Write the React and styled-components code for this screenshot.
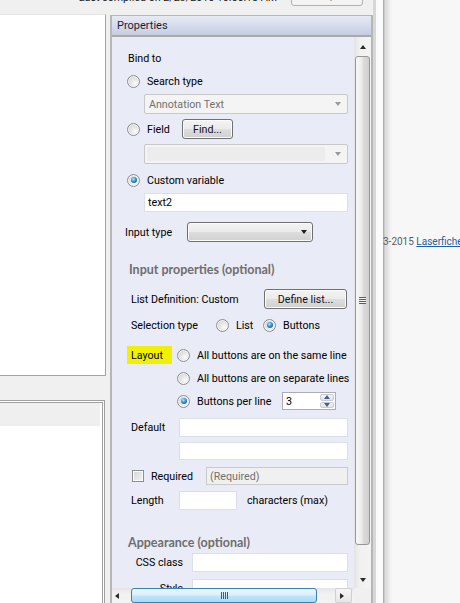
import React from "react";
import styled, { createGlobalStyle, css } from "styled-components";

const GlobalStyle = createGlobalStyle`
  html, body {
    margin: 0;
    padding: 0;
  }
  body {
    width: 460px;
    height: 603px;
    overflow: hidden;
    background: #f7f7f7;
    font-family: Roboto, "Liberation Sans", sans-serif;
    font-size: 10.7px;
    color: #000;
  }
`;

const Screen = styled.div`
  display: flex;
  width: 460px;
  height: 603px;
  overflow: hidden;
`;

const Window = styled.div`
  flex-shrink: 0;
  width: 376px;
  height: 100%;
  border-right: 7px solid #fbfbfb;
`;

const Frame = styled.div`
  display: flex;
  flex-direction: column;
  width: 373px;
  height: 100%;
  background: #f0f0f0;
  border-right: 3px solid #d7d7d7;
`;

const TopBar = styled.div`
  display: flex;
  justify-content: flex-end;
  align-items: flex-start;
  height: 14px;
  padding-right: 10px;
  overflow: hidden;
  flex-shrink: 0;
`;

const CompiledText = styled.span`
  margin-top: -9px;
  line-height: 14px;
  white-space: nowrap;
  color: #1a1a1a;
`;

const CompileButton = styled.div`
  width: 72px;
  height: 22px;
  margin-top: -16px;
  margin-left: 14px;
  box-sizing: border-box;
  border: 1px solid #adb2b5;
  border-radius: 3px;
  background: #f4f4f4;
  color: #838383;
  display: flex;
  align-items: center;
  justify-content: center;
`;

const Main = styled.div`
  display: flex;
  flex: 1;
  gap: 4px;
  min-height: 0;
`;

const LeftColumn = styled.div`
  display: flex;
  flex-direction: column;
  width: 106px;
  flex-shrink: 0;
`;

const Canvas = styled.div`
  height: 362px;
  box-sizing: border-box;
  background: #fff;
  border-top: 1px solid #e2e2e2;
  border-right: 1px solid #a3a3a3;
  border-bottom: 1px solid #a3a3a3;
`;

const ListPanel = styled.div`
  display: flex;
  flex: 1;
  width: 105px;
  margin-top: 24px;
  box-sizing: border-box;
  padding: 1px 1px 0 0;
  background: #fff;
  border-top: 1px solid #a0a0a0;
  border-right: 1px solid #a0a0a0;
`;

const ListInner = styled.div`
  flex: 1;
  display: flex;
  flex-direction: column;
  border-top: 1px solid #a0a0a0;
  border-right: 1px solid #a0a0a0;
`;

const ListHeader = styled.div`
  height: 23px;
  margin-right: 2px;
  background: #efefef;
`;

const Properties = styled.div`
  display: flex;
  flex-direction: column;
  width: 263px;
  margin-top: 1px;
  box-sizing: border-box;
  border: 2px solid #b6b6b6;
  border-top-width: 1px;
  border-bottom: none;
  flex-shrink: 0;
`;

const PanelHeader = styled.div`
  height: 19px;
  display: flex;
  align-items: center;
  padding-left: 5px;
  font-size: 11px;
  color: #1c1c38;
  background: linear-gradient(to bottom, #e6eaf4, #d3d9e9 60%, #c5cde1);
  border-bottom: 2px solid #a9a9a9;
  flex-shrink: 0;
`;

const PanelBody = styled.div`
  flex: 1;
  min-height: 0;
  display: grid;
  grid-template-columns: 1fr 17px;
  grid-template-rows: 1fr 15px;
`;

const Content = styled.div`
  display: flex;
  flex-direction: column;
  overflow: hidden;
  padding: 13px 6px 0 13px;
  background: #e9ebf6;
`;

const Row = styled.div`
  display: flex;
  align-items: center;
  flex-shrink: 0;
  height: ${(p) => p.$h || 16}px;
  margin-top: ${(p) => p.$mt || 0}px;
  margin-left: ${(p) => p.$ml || 0}px;
  white-space: nowrap;
`;

const Label = styled.span`
  flex-shrink: 0;
  width: ${(p) => (p.$w ? `${p.$w}px` : "auto")};
  text-align: ${(p) => (p.$right ? "right" : "left")};
  margin-left: ${(p) => p.$ml || 0}px;
`;

const SectionTitle = styled.span`
  font-family: Lato, "Liberation Sans", sans-serif;
  font-size: 12.5px;
  font-weight: 700;
  color: #6e6e6e;
`;

const Highlight = styled.span`
  display: flex;
  align-items: center;
  flex-shrink: 0;
  width: 45px;
  height: 18px;
  box-sizing: border-box;
  padding-left: 4px;
  background: #f0f000;
`;

const Option = styled.span`
  display: flex;
  align-items: center;
  gap: 7px;
  flex-shrink: 0;
  width: ${(p) => (p.$w ? `${p.$w}px` : "auto")};
  margin-left: ${(p) => p.$ml || 0}px;
`;

const Radio = styled.span`
  display: flex;
  align-items: center;
  justify-content: center;
  flex-shrink: 0;
  width: 13px;
  height: 13px;
  box-sizing: border-box;
  border-radius: 50%;
  border: 1px solid #8d9095;
  background: radial-gradient(circle at 65% 65%, #fbfbfb 0%, #e4e4e4 45%, #c6c6c6 100%);
  box-shadow: inset 0 0 0 1px #f6f6f6;
  ${(p) =>
    p.$checked &&
    css`
      &::after {
        content: "";
        width: 6px;
        height: 6px;
        border-radius: 50%;
        background: radial-gradient(circle at 40% 35%, #b4e8ff 0%, #2f93d8 45%, #0e3c68 100%);
      }
    `}
`;

const Checkbox = styled.span`
  flex-shrink: 0;
  width: 12px;
  height: 12px;
  box-sizing: border-box;
  border: 1px solid #8e8f8f;
  background: linear-gradient(135deg, #d3d5d8, #f4f4f4);
  box-shadow: inset 0 0 0 1px #fafafa;
`;

const Field = styled.div`
  display: flex;
  align-items: center;
  box-sizing: border-box;
  height: 100%;
  width: ${(p) => (p.$w ? `${p.$w}px` : "auto")};
  flex: ${(p) => (p.$w ? "none" : 1)};
  margin-left: ${(p) => p.$ml || 0}px;
  padding-left: 3px;
  background: ${(p) => (p.$disabled ? "#f0f0f0" : "#fff")};
  border: 1px solid ${(p) => (p.$disabled ? "#cacaca" : "#dcdfe8")};
  color: ${(p) => (p.$disabled ? "#717171" : "#000")};
`;

const SelectBox = styled.div`
  display: flex;
  align-items: center;
  box-sizing: border-box;
  width: ${(p) => p.$w}px;
  height: 100%;
  padding: 2px 6px 2px ${(p) => (p.$inset ? 2 : 4)}px;
  border: 1px solid #c8c8c8;
  border-radius: 2px;
  background: #f4f4f4;
  color: #707070;
`;

const SelectInset = styled.span`
  flex: 1;
  align-self: stretch;
  margin-right: 10px;
  background: #ececec;
`;

const ButtonBase = css`
  display: flex;
  align-items: center;
  box-sizing: border-box;
  height: 100%;
  border: 1px solid #707070;
  border-radius: 3px;
  background: linear-gradient(to bottom, #f3f3f3 0%, #ebebeb 48%, #dddddd 52%, #d0d0d0 100%);
  box-shadow: inset 0 0 0 1px #fbfbfb;
`;

const Button = styled.div`
  ${ButtonBase};
  justify-content: center;
  width: ${(p) => p.$w}px;
  margin-left: ${(p) => (p.$push ? "auto" : `${p.$ml || 0}px`)};
  margin-right: ${(p) => p.$mr || 0}px;
  color: #101020;
`;

const DropButton = styled.div`
  ${ButtonBase};
  justify-content: flex-end;
  width: ${(p) => p.$w}px;
  padding-right: 5px;
`;

const Tri = styled.span`
  width: 0;
  height: 0;
  flex-shrink: 0;
  border-style: solid;
  margin-left: ${(p) => (p.$push ? "auto" : "0")};
  ${(p) => p.$dir === "down" && css`
    border-width: 4px 3.5px 0 3.5px;
    border-color: ${p.$c || "#1e1e1e"} transparent transparent transparent;
  `}
  ${(p) => p.$dir === "up" && css`
    border-width: 0 3.5px 4px 3.5px;
    border-color: transparent transparent ${p.$c || "#1e1e1e"} transparent;
  `}
  ${(p) => p.$dir === "left" && css`
    border-width: 3.5px 4px 3.5px 0;
    border-color: transparent ${p.$c || "#1e1e1e"} transparent transparent;
  `}
  ${(p) => p.$dir === "right" && css`
    border-width: 3.5px 0 3.5px 4px;
    border-color: transparent transparent transparent ${p.$c || "#1e1e1e"};
  `}
`;

const Spinner = styled.div`
  display: flex;
  box-sizing: border-box;
  width: 54px;
  height: 100%;
  border: 1px solid #abadb3;
  background: #fff;
`;

const SpinValue = styled.span`
  flex: 1;
  display: flex;
  align-items: center;
  padding-left: 3px;
`;

const SpinButtons = styled.span`
  display: flex;
  flex-direction: column;
  width: 14px;
  gap: 1px;
  padding: 1px;
`;

const SpinHalf = styled.span`
  flex: 1;
  display: flex;
  align-items: center;
  justify-content: center;
  border: 1px solid #c6cbd6;
  border-radius: 2px;
  background: linear-gradient(to bottom, #f5f5f7, #e1e3ea);
`;

const VScroll = styled.div`
  display: flex;
  flex-direction: column;
  align-items: center;
  background: linear-gradient(to right, #e3e3e3, #f1f1f1 35%, #f3f3f3);
`;

const ScrollBtn = styled.div`
  display: flex;
  align-items: center;
  justify-content: ${(p) => p.$justify || "center"};
  flex-shrink: 0;
  box-sizing: border-box;
  width: ${(p) => (p.$w ? `${p.$w}px` : "100%")};
  height: ${(p) => (p.$h ? `${p.$h}px` : "100%")};
  padding-left: ${(p) => p.$pl || 0}px;
  border: ${(p) => (p.$boxed ? "1px solid #d0d0d0" : "none")};
  border-radius: 2px;
  background: ${(p) => (p.$boxed ? "linear-gradient(to bottom, #f6f6f6, #e6e6e6)" : "transparent")};
`;

const VThumb = styled.div`
  display: flex;
  align-items: center;
  justify-content: center;
  width: 15px;
  height: 489px;
  box-sizing: border-box;
  border: 1px solid #979797;
  border-radius: 3px;
  background: linear-gradient(to right, #f7f7f7, #ececec 45%, #dcdcdc 55%, #cfcfcf);
  flex-shrink: 0;
`;

const Grip = styled.span`
  width: 7px;
  height: 7px;
  background: ${(p) =>
    p.$vertical
      ? "repeating-linear-gradient(to right, #4a5a6a 0 1px, transparent 1px 2px)"
      : "repeating-linear-gradient(to bottom, #5c5c5c 0 1px, #f4f4f4 1px 2px)"};
`;

const Spacer = styled.span`
  flex: ${(p) => (p.$fixed ? `0 0 ${p.$fixed}px` : 1)};
`;

const HScroll = styled.div`
  display: flex;
  align-items: stretch;
  background: linear-gradient(to bottom, #e4e4e4, #f1f1f1 35%, #f3f3f3);
`;

const HThumb = styled.div`
  display: flex;
  align-items: center;
  justify-content: center;
  width: 186px;
  margin-left: 2px;
  box-sizing: border-box;
  border: 1px solid #3c7fb1;
  border-radius: 3px;
  background: linear-gradient(to bottom, #eaf6fd 0%, #d9f0fc 45%, #bee6fd 55%, #a7d9f5 100%);
`;

const Corner = styled.div`
  background: #f0f0f0;
`;

const Page = styled.div`
  flex: 1;
  padding-top: 236px;
  background: linear-gradient(to right, rgba(0, 0, 0, 0.35) 0, rgba(0, 0, 0, 0.12) 2px, rgba(0, 0, 0, 0) 9px), #f7f7f7;
  overflow: hidden;
  white-space: nowrap;
  font-size: 10px;
  color: #5c5c5c;
`;

const PageLink = styled.span`
  color: #1d5ea8;
  text-decoration: underline;
`;

const RadioLine = ({ checked, children, ...rest }) => (
  <Option {...rest}>
    <Radio $checked={checked} />
    <span>{children}</span>
  </Option>
);

const App = () => (
  <>
    <GlobalStyle />
    <Screen>
      <Window>
        <Frame>
          <TopBar>
            <CompiledText>Last compiled on 2/23/2015 10:55:18 AM</CompiledText>
            <CompileButton>Compile</CompileButton>
          </TopBar>
          <Main>
            <LeftColumn>
              <Canvas />
              <ListPanel>
                <ListInner>
                  <ListHeader />
                </ListInner>
              </ListPanel>
            </LeftColumn>
            <Properties>
              <PanelHeader>Properties</PanelHeader>
              <PanelBody>
                <Content>
                  <Row $ml={3}>Bind to</Row>
                  <Row $mt={7} $ml={2}>
                    <RadioLine>Search type</RadioLine>
                  </Row>
                  <Row $mt={5} $h={20} $ml={19}>
                    <SelectBox $w={204}>
                      Annotation Text
                      <Tri $dir="down" $push $c="#9a9a9a" />
                    </SelectBox>
                  </Row>
                  <Row $mt={5} $h={20} $ml={2}>
                    <RadioLine $w={55}>Field</RadioLine>
                    <Button $w={51}>Find...</Button>
                  </Row>
                  <Row $mt={5} $h={20} $ml={19}>
                    <SelectBox $w={204} $inset>
                      <SelectInset />
                      <Tri $dir="down" $c="#9a9a9a" />
                    </SelectBox>
                  </Row>
                  <Row $mt={8} $ml={2}>
                    <RadioLine checked>Custom variable</RadioLine>
                  </Row>
                  <Row $mt={5} $h={19} $ml={19}>
                    <Field $w={204}>text2</Field>
                  </Row>
                  <Row $mt={10} $h={20}>
                    <Label $w={62}>Input type</Label>
                    <DropButton $w={126}>
                      <Tri $dir="down" />
                    </DropButton>
                  </Row>
                  <Row $mt={18} $h={18} $ml={4}>
                    <SectionTitle>Input properties (optional)</SectionTitle>
                  </Row>
                  <Row $mt={11} $h={20} $ml={6}>
                    <Label>List Definition: Custom</Label>
                    <Button $w={83} $push $mr={1}>
                      Define list...
                    </Button>
                  </Row>
                  <Row $mt={8} $ml={6}>
                    <Label $w={85}>Selection type</Label>
                    <RadioLine $w={47}>List</RadioLine>
                    <RadioLine checked>Buttons</RadioLine>
                  </Row>
                  <Row $mt={13} $h={18} $ml={2}>
                    <Highlight>Layout</Highlight>
                    <RadioLine $ml={5}>All buttons are on the same line</RadioLine>
                  </Row>
                  <Row $mt={5} $h={18} $ml={52}>
                    <RadioLine>All buttons are on separate lines</RadioLine>
                  </Row>
                  <Row $mt={5} $h={18} $ml={52}>
                    <RadioLine checked $w={105}>
                      Buttons per line
                    </RadioLine>
                    <Spinner>
                      <SpinValue>3</SpinValue>
                      <SpinButtons>
                        <SpinHalf>
                          <Tri $dir="up" $c="#4c5f80" />
                        </SpinHalf>
                        <SpinHalf>
                          <Tri $dir="down" $c="#4c5f80" />
                        </SpinHalf>
                      </SpinButtons>
                    </Spinner>
                  </Row>
                  <Row $mt={8} $h={19} $ml={6}>
                    <Label $w={48}>Default</Label>
                    <Field />
                  </Row>
                  <Row $mt={5} $h={18} $ml={54}>
                    <Field />
                  </Row>
                  <Row $mt={7} $h={18} $ml={7}>
                    <Option $w={74}>
                      <Checkbox />
                      <span>Required</span>
                    </Option>
                    <Field $disabled>(Required)</Field>
                  </Row>
                  <Row $mt={6} $h={19} $ml={6}>
                    <Label $w={48}>Length</Label>
                    <Field $w={58} />
                    <Label $ml={10}>characters (max)</Label>
                  </Row>
                  <Row $mt={23} $h={18} $ml={3}>
                    <SectionTitle>Appearance (optional)</SectionTitle>
                  </Row>
                  <Row $mt={2} $h={19} $ml={6}>
                    <Label $w={52} $right>
                      CSS class
                    </Label>
                    <Field $ml={9} />
                  </Row>
                  <Row $mt={7} $h={19} $ml={6}>
                    <Label $w={52} $right>
                      Style
                    </Label>
                    <Field $ml={9} />
                  </Row>
                </Content>
                <VScroll>
                  <ScrollBtn $h={19}>
                    <Tri $dir="up" $c="#2a2a2a" />
                  </ScrollBtn>
                  <VThumb>
                    <Grip />
                  </VThumb>
                  <Spacer />
                  <ScrollBtn $h={17}>
                    <Tri $dir="down" $c="#2a2a2a" />
                  </ScrollBtn>
                </VScroll>
                <HScroll>
                  <ScrollBtn $w={17} $justify="flex-start" $pl={3}>
                    <Tri $dir="left" $c="#2a2a2a" />
                  </ScrollBtn>
                  <HThumb>
                    <Grip $vertical />
                  </HThumb>
                  <Spacer />
                  <ScrollBtn $w={17} $boxed $justify="flex-start" $pl={4}>
                    <Tri $dir="right" $c="#2a2a2a" />
                  </ScrollBtn>
                  <Spacer $fixed={2} />
                </HScroll>
                <Corner />
              </PanelBody>
            </Properties>
          </Main>
        </Frame>
      </Window>
      <Page>
        3-2015 <PageLink>Laserfiche</PageLink>
      </Page>
    </Screen>
  </>
);

export default App;
